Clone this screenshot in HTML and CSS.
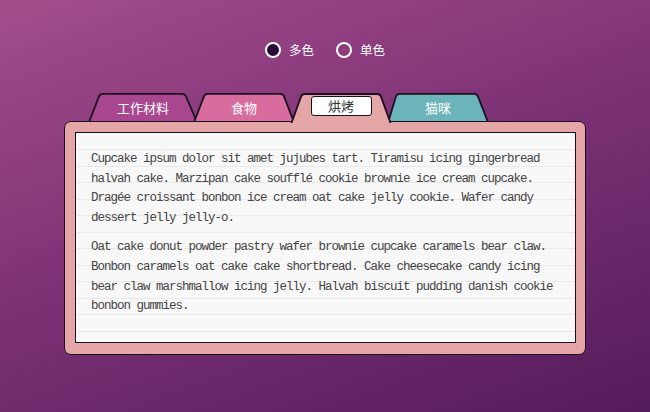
FILE: index.html
```html
<!DOCTYPE html>
<html lang="zh-CN">
<head>
    <meta charset="UTF-8">
    <meta name="viewport" content="width=device-width, initial-scale=1.0">
    <title>Folder Tabs</title>
    <link rel="stylesheet" href="styles.css">
</head>
<body>

    <div class="modes">
        <label class="mode"><input type="radio" name="mode" checked> 多色</label>
        <label class="mode"><input type="radio" name="mode"> 单色</label>
    </div>

    <div class="folder">
        <div class="tabs">
            <div class="tab tab-work">
                <svg class="tab-shape" viewBox="0 0 108 29" preserveAspectRatio="none"><path d="M0.5 29 L10 3.5 Q11 1 14 1 L93 1 Q96 1 97 3.5 L107.5 29" /></svg>
                <span>工作材料</span>
            </div>
            <div class="tab tab-food">
                <svg class="tab-shape" viewBox="0 0 100 29" preserveAspectRatio="none"><path d="M0.5 29 L10 3.5 Q11 1 14 1 L86 1 Q89 1 90 3.5 L99.5 29" /></svg>
                <span>食物</span>
            </div>
            <div class="tab tab-bake active">
                <svg class="tab-shape" viewBox="0 0 100 29" preserveAspectRatio="none"><path d="M0.5 29 L10 3.5 Q11 1 14 1 L86 1 Q89 1 90 3.5 L99.5 29" /></svg>
                <span>烘烤</span>
            </div>
            <div class="tab tab-cat">
                <svg class="tab-shape" viewBox="0 0 100 29" preserveAspectRatio="none"><path d="M0.5 29 L8 3.5 Q9 1 12 1 L86 1 Q89 1 90 3.5 L99.5 29" /></svg>
                <span>猫咪</span>
            </div>
        </div>

        <div class="frame">
            <div class="paper">
                <p>Cupcake ipsum dolor sit amet jujubes tart. Tiramisu icing gingerbread halvah cake. Marzipan cake soufflé cookie brownie ice cream cupcake. Dragée croissant bonbon ice cream oat cake jelly cookie. Wafer candy dessert jelly jelly-o.</p>
                <p>Oat cake donut powder pastry wafer brownie cupcake caramels bear claw. Bonbon caramels oat cake cake shortbread. Cake cheesecake candy icing bear claw marshmallow icing jelly. Halvah biscuit pudding danish cookie bonbon gummies.</p>
            </div>
        </div>
    </div>

</body>
</html>
```

FILE: styles.css
```css
body { margin: 0; height: 412px; overflow: hidden; font-family: "Noto Sans CJK SC", sans-serif; background: linear-gradient(160deg, #a44d8b 0%, #7e3376 45%, #541b5c 100%); }

.modes { display: flex; justify-content: center; gap: 22px; padding-top: 42px; }
.mode { display: flex; align-items: center; gap: 8px; color: #fff; font-size: 12.5px; line-height: 16px; }
.mode input { appearance: none; margin: 0; width: 16px; height: 16px; border: 2px solid #fff; border-radius: 50%; box-sizing: border-box; }
.mode input:checked { background: #2a0b3a; border-width: 2.5px; }

.folder { width: 522px; margin: 35px auto 0; }
.tabs { display: flex; align-items: flex-end; padding-left: 25px; height: 28px; position: relative; z-index: 2; }
.tab { position: relative; width: 100px; height: 28px; display: flex; justify-content: center; align-items: center; color: #fff; font-size: 13px; margin-left: -3px; }
.tab span { position: relative; }
.tab-work { width: 108px; margin-left: 0; }
.tab-shape { position: absolute; inset: 0; width: 100%; height: 100%; overflow: visible; }
.tab-shape path { stroke: #1c1020; stroke-width: 1.8; stroke-linejoin: round; }
.tab-work path { fill: #a8468f; }
.tab-food path { fill: #d86c9e; }
.tab-bake path { fill: #e5a6a8; }
.tab-cat path { fill: #6bb4ba; }
.tab-bake { z-index: 3; height: 30px; margin-bottom: -2px; }
.tab-bake span { background: #fff; color: #333; border: 1.5px solid #1c1020; border-radius: 3px; width: 59px; height: 18px; line-height: 18px; text-align: center; margin-bottom: 4px; }

.frame { background: #e5a6a8; border: 1.5px solid #1c1020; border-radius: 7px; padding: 10px 9px 11px 10px; position: relative; z-index: 1; }
.paper { background-color: #f8f8f8; background-image: repeating-linear-gradient(to bottom, transparent 0, transparent 15.5px, #e9e9e9 15.5px, #e9e9e9 16.5px); background-position: 0 1px; border: 1.5px solid #1c1020; height: 211px; box-sizing: border-box; padding: 17px 16px 0 15px; font-family: "Liberation Mono", monospace; font-size: 12.5px; letter-spacing: -1px; line-height: 19.6px; color: #444; }
.paper p { margin: 0 0 10px; }
```
